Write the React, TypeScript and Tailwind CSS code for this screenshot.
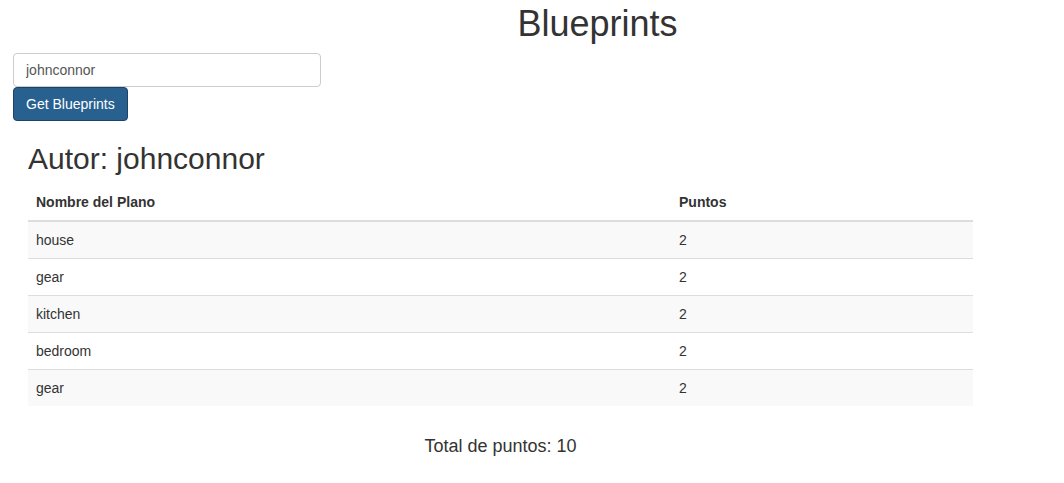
import React from "react";

const rows = [
  { name: "house", points: 2 },
  { name: "gear", points: 2 },
  { name: "kitchen", points: 2 },
  { name: "bedroom", points: 2 },
  { name: "gear", points: 2 },
];

export default function App() {
  const total = rows.reduce((a, r) => a + r.points, 0);
  return (
    <div
      className="min-h-[483px] w-full bg-white text-[#333] text-[14px]"
      style={{ fontFamily: '"Liberation Sans", Arial, sans-serif' }}
    >
      <div className="pt-[4px] pl-[131px] text-center">
        <h1 className="m-0 text-[36px] leading-[40px] font-normal">Blueprints</h1>
      </div>
      <div className="mt-[9px] pl-[13px] flex flex-col items-start">
        <input
          type="text"
          defaultValue="johnconnor"
          className="box-border h-[34px] w-[308px] rounded-[4px] border border-[#ccc] bg-white px-[12px] text-[14px] text-[#555] outline-none"
        />
        <button
          type="button"
          className="box-border h-[34px] rounded-[4px] border border-[#1d4466] bg-[#286090] px-[12px] text-[14px] leading-[20px] text-white"
        >
          Get Blueprints
        </button>
      </div>
      <div className="mt-[21px] pl-[28px] w-[973px]">
        <h2 className="m-0 text-[30px] leading-[33px] font-normal">Autor: johnconnor</h2>
        <table className="mt-[9px] w-[945px] border-collapse">
          <thead>
            <tr>
              <th className="w-[643px] border-b-2 border-[#ddd] p-[8px] text-left text-[14px] font-bold leading-[20px]">
                Nombre del Plano
              </th>
              <th className="border-b-2 border-[#ddd] p-[8px] text-left text-[14px] font-bold leading-[20px]">
                Puntos
              </th>
            </tr>
          </thead>
          <tbody>
            {rows.map((r, i) => (
              <tr key={i} className={i % 2 === 0 ? "bg-[#f9f9f9]" : "bg-white"}>
                <td className="border-t border-[#ddd] p-[8px] leading-[20px]">{r.name}</td>
                <td className="border-t border-[#ddd] p-[8px] leading-[20px]">{r.points}</td>
              </tr>
            ))}
          </tbody>
        </table>
        <p className="mt-[27px] w-[945px] text-center text-[18px] leading-[26px]">
          Total de puntos: {total}
        </p>
      </div>
    </div>
  );
}
